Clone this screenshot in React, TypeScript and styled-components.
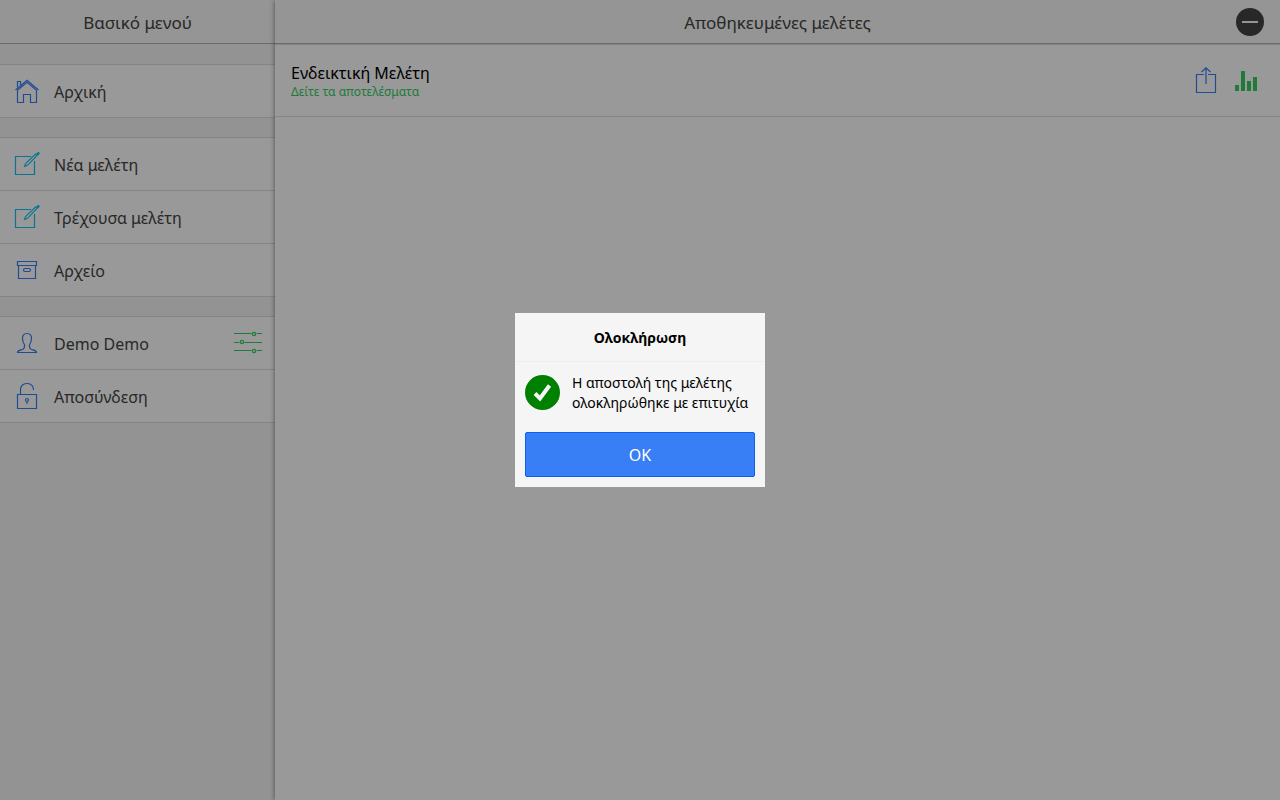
import React from "react";
import styled, { createGlobalStyle } from "styled-components";

const GlobalStyle = createGlobalStyle`
  *, *::before, *::after { box-sizing: border-box; }
  body {
    margin: 0;
    background: #fff;
    color: #000;
    font-family: "Noto Sans", "Open Sans", sans-serif;
    font-size: 14px;
    line-height: 20px;
  }
  h1, h2, h3, p, ul { margin: 0; padding: 0; }
  svg { display: block; }
`;

const blue = "#387ef5";
const cyan = "#11c1f3";
const green = "#33cd5f";

const Layout = styled.div`
  display: flex;
  min-height: 100vh;
`;

const Sidebar = styled.aside`
  flex: 0 0 275px;
  display: flex;
  flex-direction: column;
  background: #f5f5f5;
`;

const Main = styled.main`
  flex: 1;
  min-width: 0;
  position: relative;
  background: #fff;
  box-shadow: 0 0 5px rgba(0, 0, 0, 0.5);
`;

const Bar = styled.header`
  display: flex;
  align-items: center;
  height: 44px;
  padding: 0 16px;
  background: #f8f8f8;
  border-bottom: 1px solid #b2b2b2;
`;

const BarTitle = styled.h1`
  flex: 1;
  padding-top: 2px;
  color: #444;
  font-size: 17px;
  font-weight: 400;
  line-height: 24px;
  text-align: center;
`;

const MainTitle = styled(BarTitle)`
  padding-left: 28px;
`;

const IconButton = styled.button`
  display: flex;
  padding: 0;
  border: 0;
  background: none;
  cursor: pointer;
`;

const Menu = styled.nav`
  display: flex;
  flex-direction: column;
  gap: 19px;
  padding-top: 20px;
`;

const MenuGroup = styled.ul`
  list-style: none;
  background: #fff;
  border-bottom: 1px solid #ddd;
`;

const MenuItem = styled.li`
  display: flex;
  align-items: center;
  height: 53px;
  padding-right: 12px;
  border-top: 1px solid #ddd;
`;

const MenuLink = styled.a`
  flex: 1;
  display: flex;
  align-items: center;
  gap: 12px;
  height: 52px;
  padding: 0 12px;
  color: #444;
  font-size: 16px;
  text-decoration: none;
`;

const MenuLabel = styled.span`
  padding-top: 2px;
`;

const Study = styled.section`
  display: flex;
  align-items: center;
  justify-content: space-between;
  height: 73px;
  padding: 0 20px 0 16px;
  border-top: 1px solid #ddd;
  border-bottom: 1px solid #ddd;
`;

const StudyText = styled.div`
  padding-top: 2px;
`;

const StudyName = styled.h2`
  font-size: 16px;
  font-weight: 400;
  line-height: 20px;
`;

const StudyLink = styled.a`
  display: block;
  color: ${green};
  font-size: 12px;
  line-height: 18px;
  text-decoration: none;
`;

const Actions = styled.div`
  display: flex;
  gap: 12px;
`;

const Backdrop = styled.div`
  position: fixed;
  inset: 0;
  z-index: 10;
  display: flex;
  align-items: center;
  justify-content: center;
  background: rgba(0, 0, 0, 0.4);
`;

const Popup = styled.div`
  width: 250px;
  background: #f5f5f5;
`;

const PopupTitle = styled.h3`
  padding: 15px 10px 13px;
  border-bottom: 1px solid #eee;
  font-size: 14px;
  font-weight: 700;
  line-height: 20px;
  text-align: center;
`;

const PopupBody = styled.div`
  display: flex;
  align-items: center;
  gap: 12px;
  padding: 11px 10px 19px;
`;

const PopupText = styled.p`
  flex: 1;
  font-size: 14px;
  white-space: nowrap;
`;

const PopupFooter = styled.div`
  padding: 0 10px 10px;
`;

const OkButton = styled.button`
  display: block;
  width: 100%;
  height: 45px;
  border: 1px solid #0c60ee;
  border-radius: 2px;
  background: ${blue};
  color: #fff;
  font-family: inherit;
  font-size: 16px;
  cursor: pointer;
`;

const HomeIcon = () => (
  <svg width="30" height="30" viewBox="0 0 30 30" fill="none" stroke={blue} strokeWidth="1.2" aria-hidden="true">
    <path d="M3.5 14 15 4.200 26.5 14M5.5 14.200 15 6.200l9.500 8V26.500H18.500V18.500H11.500V26.500H5.500Z" />
    <path d="M5.500 11.500V5.500H8.500V9" />
  </svg>
);

const ComposeIcon = () => (
  <svg width="30" height="30" viewBox="0 -1 30 30" fill="none" stroke={cyan} aria-hidden="true">
    <path d="M19 6.500H3.500V24.500H22.500V11" strokeWidth="1.2" />
    <path d="m12.500 16.500 1-3L23.500 4l1.500 1.500-9.500 9.800Z" strokeWidth="1.1" />
    <path d="m25 3.800 1.200 1.200M25.200 3.500 26.300 2.600 27 3.400 26.200 4.500Z" strokeWidth="1.4" />
  </svg>
);

const ArchiveIcon = () => (
  <svg width="30" height="30" viewBox="0 0 30 30" fill="none" stroke={blue} strokeWidth="1.2" aria-hidden="true">
    <path d="M5.500 6.500H24.500V10.500H5.500ZM6.500 10.500V23.500H23.500V10.500" />
    <rect x="11.500" y="13.500" width="7" height="3" rx="1.500" />
  </svg>
);

const PersonIcon = () => (
  <svg width="30" height="30" viewBox="0 0 30 30" fill="none" stroke={blue} strokeWidth="1.200" aria-hidden="true">
    <path d="M15 5.500c-3 0-4.700 2-4.500 5 .1 2.200.6 4.600 2 6.200.3 2.200.3 3.600-1.500 4.500-2 .9-5.500.8-5.500 3.300h19c0-2.500-3.500-2.400-5.500-3.300-1.800-.9-1.800-2.300-1.500-4.500 1.400-1.600 1.900-4 2-6.200.2-3-1.500-5-4.500-5Z" />
  </svg>
);

const UnlockIcon = () => (
  <svg width="30" height="30" viewBox="0 0 30 30" fill="none" stroke={blue} strokeWidth="1.2" aria-hidden="true">
    <path d="M5.500 13.500H24.500V27.500H5.500ZM8.500 13.500V8.500a6 6 0 0 1 6-6h1a6 6 0 0 1 6 6.500" />
    <circle cx="15" cy="19" r="1.500" />
    <path d="M15 20.500V23" />
  </svg>
);

const SlidersIcon = () => (
  <svg width="30" height="30" viewBox="0 0 30 30" fill="none" stroke={green} strokeWidth="1.2" aria-hidden="true">
    <path d="M1 5.500H18.500M23.500 5.500H29M1 14.500H6.500M11.500 14.500H29M1 22.500H18.500M23.500 22.500H29" />
    <circle cx="21" cy="6" r="1.600" />
    <circle cx="9" cy="14" r="1.600" />
    <circle cx="21" cy="23" r="1.600" />
  </svg>
);

const MinusIcon = () => (
  <svg width="28" height="28" viewBox="0 0 28 28" aria-hidden="true">
    <circle cx="14" cy="14" r="14" fill="#444" />
    <path d="M6 14H22" stroke="#f8f8f8" strokeWidth="2" />
  </svg>
);

const ShareIcon = () => (
  <svg width="28" height="32" viewBox="0 0 28 32" fill="none" stroke={blue} strokeWidth="1.200" aria-hidden="true">
    <path d="M12 9.500H4.500V27.500H23.500V9.500H16M14 19V3M9.500 7 14 2.800 18.500 7" />
  </svg>
);

const StatsIcon = () => (
  <svg width="28" height="32" viewBox="0 0 28 32" fill={green} aria-hidden="true">
    <path d="M3 20h4v6H3ZM9 6h4v20H9ZM15 16h4v10h-4ZM21 12h4v14h-4Z" />
  </svg>
);

const SuccessIcon = () => (
  <svg width="35" height="36" viewBox="0 0 35 36" aria-hidden="true">
    <circle cx="17.500" cy="17.500" r="17.500" fill="green" />
    <path d="m10 18.500 5 5L24.500 10.500" fill="none" stroke="#f5f5f5" strokeWidth="4" />
  </svg>
);

type Entry = {
  label: string;
  icon: React.ReactNode;
  settings?: boolean;
};

const menu: Entry[][] = [
  [{ label: "Αρχική", icon: <HomeIcon /> }],
  [
    { label: "Νέα μελέτη", icon: <ComposeIcon /> },
    { label: "Τρέχουσα μελέτη", icon: <ComposeIcon /> },
    { label: "Αρχείο", icon: <ArchiveIcon /> },
  ],
  [
    { label: "Demo Demo", icon: <PersonIcon />, settings: true },
    { label: "Αποσύνδεση", icon: <UnlockIcon /> },
  ],
];

export default function App() {
  return (
    <>
      <GlobalStyle />
      <Layout>
        <Sidebar>
          <Bar>
            <BarTitle>Βασικό μενού</BarTitle>
          </Bar>
          <Menu>
            {menu.map((group) => (
              <MenuGroup key={group[0].label}>
                {group.map((entry) => (
                  <MenuItem key={entry.label}>
                    <MenuLink href="#">
                      {entry.icon}
                      <MenuLabel>{entry.label}</MenuLabel>
                    </MenuLink>
                    {entry.settings && (
                      <IconButton type="button" aria-label="Ρυθμίσεις">
                        <SlidersIcon />
                      </IconButton>
                    )}
                  </MenuItem>
                ))}
              </MenuGroup>
            ))}
          </Menu>
        </Sidebar>
        <Main>
          <Bar>
            <MainTitle as="h2">Αποθηκευμένες μελέτες</MainTitle>
            <IconButton type="button" aria-label="Αφαίρεση">
              <MinusIcon />
            </IconButton>
          </Bar>
          <Study>
            <StudyText>
              <StudyName>Ενδεικτική Μελέτη</StudyName>
              <StudyLink href="#">Δείτε τα αποτελέσματα</StudyLink>
            </StudyText>
            <Actions>
              <IconButton type="button" aria-label="Αποστολή">
                <ShareIcon />
              </IconButton>
              <IconButton type="button" aria-label="Αποτελέσματα">
                <StatsIcon />
              </IconButton>
            </Actions>
          </Study>
        </Main>
      </Layout>
      <Backdrop>
        <Popup role="dialog" aria-modal="true" aria-labelledby="popup-title">
          <PopupTitle id="popup-title">Ολοκλήρωση</PopupTitle>
          <PopupBody>
            <SuccessIcon />
            <PopupText>
              Η αποστολή της μελέτης
              <br />
              ολοκληρώθηκε με επιτυχία
            </PopupText>
          </PopupBody>
          <PopupFooter>
            <OkButton type="button">OK</OkButton>
          </PopupFooter>
        </Popup>
      </Backdrop>
    </>
  );
}
